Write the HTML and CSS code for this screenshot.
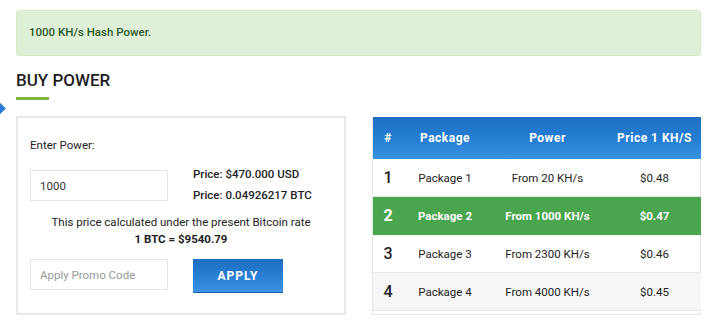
FILE: index.html
```html
<!DOCTYPE html>
<html lang="en">
<head>
    <meta charset="UTF-8">
    <title>Buy Power</title>
    <link rel="stylesheet" href="styles.css">
</head>
<body>
    <div class="page">
        <div class="alert">1000 KH/s Hash Power.</div>

        <h2 class="title">BUY POWER</h2>
        <span class="marker"></span>

        <div class="buy">
            <!-- calculator -->
            <div class="calc">
                <p class="label">Enter Power:</p>
                <div class="calc-row">
                    <input type="text" class="field" value="1000">
                    <div class="prices">
                        <p>Price: $470.000 USD</p>
                        <p>Price: 0.04926217 BTC</p>
                    </div>
                </div>
                <p class="rate">This price calculated under the present Bitcoin rate<br><b>1 BTC = $9540.79</b></p>
                <div class="calc-row promo">
                    <input type="text" class="field" placeholder="Apply Promo Code">
                    <button class="apply">APPLY</button>
                </div>
            </div>

            <!-- packages -->
            <div class="packages">
                <table>
                    <thead>
                        <tr>
                            <th class="c-num">#</th>
                            <th class="c-pkg">Package</th>
                            <th class="c-pow">Power</th>
                            <th class="c-price">Price 1 KH/S</th>
                        </tr>
                    </thead>
                    <tbody>
                        <tr>
                            <td class="num">1</td><td>Package 1</td><td>From 20 KH/s</td><td>$0.48</td>
                        </tr>
                        <tr class="active">
                            <td class="num">2</td><td>Package 2</td><td>From 1000 KH/s</td><td>$0.47</td>
                        </tr>
                        <tr>
                            <td class="num">3</td><td>Package 3</td><td>From 2300 KH/s</td><td>$0.46</td>
                        </tr>
                        <tr class="alt">
                            <td class="num">4</td><td>Package 4</td><td>From 4000 KH/s</td><td>$0.45</td>
                        </tr>
                    </tbody>
                </table>
            </div>
        </div>
    </div>
</body>
</html>
```

FILE: styles.css
```css
body {
    margin: 0;
    padding: 0;
    font-family: Roboto, "Liberation Sans", Arial, sans-serif;
    color: #222;
    background: #fff;
}
.page {
    position: relative;
    width: 685px;
    margin-left: 16px;
    padding-top: 10px;
}
.alert {
    height: 46px;
    box-sizing: border-box;
    padding: 0 12px 3px;
    display: flex;
    align-items: center;
    background-color: #dff0d8;
    border: 1px solid #d6e9c6;
    border-radius: 3px;
    color: #2d5a2d;
    font-size: 11.5px;
    font-weight: 500;
}
.title {
    margin: 14px 0 0;
    font-size: 17px;
    font-weight: 500;
    line-height: 20px;
    color: #1e1e1e;
}
.title::after {
    content: "";
    display: block;
    width: 33px;
    height: 3px;
    margin-top: 7px;
    background-color: #7cb342;
}
.marker {
    position: absolute;
    left: -21px;
    top: 104px;
    width: 9px;
    height: 9px;
    background-color: #2a7bd0;
    transform: rotate(45deg);
}
.buy {
    display: flex;
    gap: 26px;
    margin-top: 16px;
}
.calc {
    width: 330px;
    height: 199px;
    box-sizing: border-box;
    border: 2px solid #e8e8e8;
    padding: 19px 12px 0;
    font-size: 11.5px;
}
.calc p {
    margin: 0;
}
.label {
    line-height: 16px;
    color: #222;
}
.calc-row {
    display: flex;
    gap: 25px;
    margin-top: 17px;
}
.field {
    width: 138px;
    height: 31px;
    box-sizing: border-box;
    border: 1px solid #e4e4e4;
    padding: 0 9px;
    font-family: inherit;
    font-size: 11.5px;
    color: #333;
    outline: none;
}
.field::placeholder {
    color: #999;
}
.prices {
    margin-top: -6px;
    font-weight: 500;
    line-height: 21px;
}
.rate {
    margin-top: 8px !important;
    text-align: center;
    line-height: 17px;
    color: #222;
}
.rate b {
    font-weight: 700;
}
.promo {
    margin-top: 11px;
}
.apply {
    width: 90px;
    height: 34px;
    border: none;
    border-bottom: 1px solid #1a5fa8;
    background: linear-gradient(to bottom, #1c6fc2, #2c82d6 60%, #3b93e3);
    color: #fff;
    font-family: inherit;
    font-size: 12px;
    font-weight: 700;
    letter-spacing: 1px;
    cursor: pointer;
}
.packages {
    width: 329px;
    height: 198px;
    box-sizing: border-box;
    border: 1px solid #e6e6e6;
    border-top: none;
    margin-top: 1px;
}
.packages table {
    width: 328px;
    border-collapse: collapse;
    font-size: 11.5px;
}
.packages th {
    height: 42px;
    padding: 0;
    background: linear-gradient(to bottom, #1d70c3, #2680d5 60%, #3a92e2);
    color: #fff;
    font-size: 12px;
    font-weight: 700;
    letter-spacing: 0.5px;
    text-align: center;
}
.c-num { width: 30px; }
.c-pkg { width: 84px; }
.c-pow { width: 121px; }
.packages td {
    height: 37px;
    padding: 0;
    text-align: center;
    border-bottom: 1px solid #e8e8e8;
    color: #222;
}
.packages td.num {
    font-size: 16px;
    font-weight: 500;
}
.packages tr.active td {
    background-color: #4aa54f;
    color: #fff;
    font-weight: 700;
    border-bottom-color: #4aa54f;
}
.packages tr.alt td {
    background-color: #f6f6f6;
}
```
